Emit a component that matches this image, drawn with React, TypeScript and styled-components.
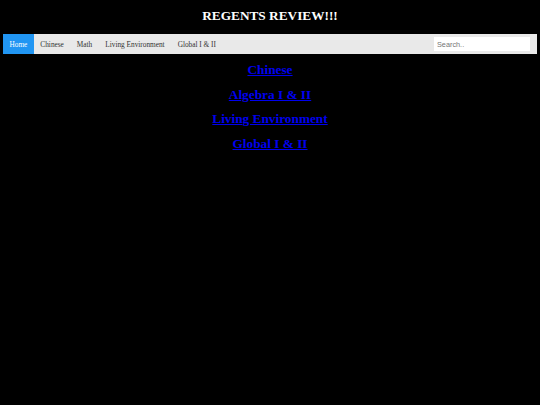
import React from 'react';
import styled, { createGlobalStyle } from 'styled-components';

const GlobalStyle = createGlobalStyle`
  body {
    margin: 3px;
    background-color: #000;
    font-family: "Liberation Serif", "Times New Roman", serif;
  }
`;

const Title = styled.h1`
  margin: 5px 0 10px;
  font-size: 13.3px;
  line-height: 16px;
  font-weight: bold;
  text-align: center;
  color: #fff;
`;

const TopNav = styled.nav`
  display: flex;
  align-items: center;
  height: 20px;
  background-color: #e9e9e9;
  overflow: hidden;
`;

const NavItem = styled.a<{ active?: boolean }>`
  display: flex;
  align-items: center;
  height: 100%;
  padding: 0 6.5px;
  font-size: 7.3px;
  color: ${({ active }) => (active ? '#fff' : '#333')};
  background-color: ${({ active }) => (active ? '#2196f3' : 'transparent')};
  text-decoration: none;
  cursor: pointer;
`;

const SearchInput = styled.input`
  margin-left: auto;
  margin-right: 7px;
  width: 96px;
  height: 14px;
  box-sizing: border-box;
  padding: 0 3px;
  border: none;
  outline: none;
  background: #fff;
  font-family: "Liberation Sans", Arial, sans-serif;
  font-size: 7.3px;
  color: #333;

  &::placeholder {
    color: #757575;
  }
`;

const LinkList = styled.div`
  display: flex;
  flex-direction: column;
  align-items: center;
  gap: 8.9px;
  margin-top: 8px;
`;

const SubjectLink = styled.a`
  font-size: 13.3px;
  line-height: 15.7px;
  font-weight: bold;
  color: #0000ee;
  text-decoration: underline;
`;

const navLinks = ['Home', 'Chinese', 'Math', 'Living Environment', 'Global I & II'];
const subjects = ['Chinese', 'Algebra I & II', 'Living Environment', 'Global I & II'];

const App: React.FC = () => {
  return (
    <>
      <GlobalStyle />
      <Title>REGENTS REVIEW!!!</Title>
      <TopNav>
        {navLinks.map((label, i) => (
          <NavItem key={label} active={i === 0}>
            {label}
          </NavItem>
        ))}
        <SearchInput type="text" placeholder="Search.." />
      </TopNav>
      <LinkList>
        {subjects.map((s) => (
          <SubjectLink key={s} href="#">
            {s}
          </SubjectLink>
        ))}
      </LinkList>
    </>
  );
};

export default App;
